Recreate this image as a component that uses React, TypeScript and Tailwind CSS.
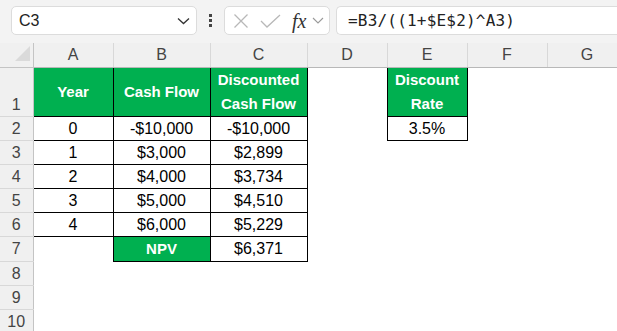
import React from 'react';

type Cell = { t?: string; k?: 'head' | 'val' };

const COLS = ['A', 'B', 'C', 'D', 'E', 'F', 'G'];
const WIDTHS = ['w-[80px]', 'w-[97px]', 'w-[97px]', 'w-[80px]', 'w-[80px]', 'w-[80px]', 'w-[80px]'];

const H = (t: string): Cell => ({ t, k: 'head' });
const V = (t: string): Cell => ({ t, k: 'val' });
const E: Cell = {};

const ROWS: Cell[][] = [
  [H('Year'), H('Cash Flow'), H('Discounted\nCash Flow'), E, H('Discount\nRate'), E, E],
  [V('0'), V('-$10,000'), V('-$10,000'), E, V('3.5%'), E, E],
  [V('1'), V('$3,000'), V('$2,899'), E, E, E, E],
  [V('2'), V('$4,000'), V('$3,734'), E, E, E, E],
  [V('3'), V('$5,000'), V('$4,510'), E, E, E, E],
  [V('4'), V('$6,000'), V('$5,229'), E, E, E, E],
  [E, H('NPV'), V('$6,371'), E, E, E, E],
  [E, E, E, E, E, E, E],
  [E, E, E, E, E, E, E],
  [E, E, E, E, E, E, E],
];

function Toolbar() {
  return (
    <div className="flex h-[43px] items-start bg-[#f3f3f3] pt-[6px]">
      {/* name box */}
      <div className="ml-[11px] flex h-[29px] w-[186px] items-center justify-between rounded-[5px] border border-[#dcdcdc] bg-white pl-[7px] pr-[6px]">
        <span className="text-[16px] text-[#222]">C3</span>
        <svg width="13" height="8" viewBox="0 0 13 8" fill="none">
          <path d="M1 1.5 L6.5 6.5 L12 1.5" stroke="#333" strokeWidth="1.3" />
        </svg>
      </div>
      {/* grip */}
      <div className="flex h-[29px] w-[27px] flex-col items-center justify-center gap-[2px]">
        <div className="h-[3px] w-[3px] bg-[#444]" />
        <div className="h-[3px] w-[3px] bg-[#444]" />
        <div className="h-[3px] w-[3px] bg-[#444]" />
      </div>
      {/* function buttons */}
      <div className="flex h-[29px] w-[106px] items-center rounded-[5px] border border-[#dcdcdc] bg-white pl-[8px]">
        <svg width="16" height="16" viewBox="0 0 16 16" fill="none">
          <path d="M1.5 1.5 L14.5 14.5 M14.5 1.5 L1.5 14.5" stroke="#b8b8b8" strokeWidth="1.3" />
        </svg>
        <svg className="ml-[11px]" width="21" height="14" viewBox="0 0 21 14" fill="none">
          <path d="M1 7 L7 13 L20 1" stroke="#b8b8b8" strokeWidth="1.3" />
        </svg>
        <span className="ml-[11px] font-['Liberation_Serif'] text-[20px] leading-none italic text-[#333]">fx</span>
        <svg className="ml-[6px]" width="12" height="7" viewBox="0 0 12 7" fill="none">
          <path d="M1 1 L6 6 L11 1" stroke="#9a9a9a" strokeWidth="1.1" />
        </svg>
      </div>
      {/* formula */}
      <div className="ml-[6px] flex h-[29px] flex-1 items-center rounded-l-[5px] border border-r-0 border-[#dcdcdc] bg-white pl-[11px]">
        <span className="font-['DejaVu_Sans_Mono'] text-[16px] tracking-[0.2px] text-[#222]">=B3/((1+$E$2)^A3)</span>
      </div>
    </div>
  );
}

function Corner() {
  return (
    <div className="flex h-full items-end justify-end pb-[3px] pr-[3px]">
      <svg width="15" height="15" viewBox="0 0 15 15">
        <path d="M15 0 L15 15 L0 15 Z" fill="#dadada" />
      </svg>
    </div>
  );
}

export default function App() {
  return (
    <div className="h-[331px] w-[617px] overflow-hidden bg-white font-['Liberation_Sans',sans-serif]">
      <Toolbar />
      <table className="w-[627px] table-fixed border-collapse">
        <thead>
          <tr className="h-[24px] bg-[#f0f0f0]">
            <th className="w-[33px] border-b border-r border-[#c4c4c4] p-0">
              <Corner />
            </th>
            {COLS.map((c, i) => (
              <th
                key={c}
                className={`${WIDTHS[i]} border-b border-r border-b-[#b8b8b8] border-r-[#d8d8d8] p-0 text-center text-[16px] font-normal text-[#444]`}
              >
                {c}
              </th>
            ))}
          </tr>
        </thead>
        <tbody>
          {ROWS.map((row, r) => (
            <tr key={r} className={r === 0 ? 'h-[48px]' : 'h-[24px]'}>
              <td
                className={`border-b border-r border-b-[#d8d8d8] border-r-[#c4c4c4] bg-[#f0f0f0] p-0 text-center text-[16px] leading-[22px] text-[#444] ${r === 0 ? 'align-bottom' : 'align-middle'}`}
              >
                {r + 1}
              </td>
              {row.map((cell, i) => {
                if (cell.k === 'head') {
                  return (
                    <td
                      key={i}
                      className="whitespace-pre-line border border-black bg-[#00b050] p-0 text-center text-[15px] leading-[24px] font-bold text-white"
                    >
                      {cell.t}
                    </td>
                  );
                }
                if (cell.k === 'val') {
                  return (
                    <td key={i} className="border border-black p-0 text-center text-[16px] leading-[22px] text-black">
                      {cell.t}
                    </td>
                  );
                }
                return <td key={i} className="p-0" />;
              })}
            </tr>
          ))}
        </tbody>
      </table>
    </div>
  );
}
